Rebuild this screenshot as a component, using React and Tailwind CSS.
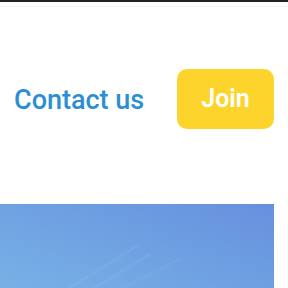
export default function App() {
  return (
    <div className="w-[288px] h-[288px] overflow-hidden bg-white" style={{ fontFamily: 'Roboto, "Noto Sans", sans-serif' }}>
      <div className="h-[2px] bg-[#222]" />
      <div className="mt-[4px] h-px bg-[#f4f4f4]" />
      <div className="flex items-center justify-between pl-[14px] pr-[14px] mt-[62px]">
        <span className="text-[27px] font-medium text-[#2c8fd5] pt-[2px]">Contact us</span>
        <button className="w-[97px] h-[60px] rounded-[10px] bg-[#fdd42b] text-white text-[25px] font-semibold">Join</button>
      </div>
      <div className="mt-[75px] mr-[14px] h-[100px] bg-gradient-to-bl from-[#6790de] to-[#78b4e6] relative overflow-hidden">
        <svg className="absolute inset-0" width="274" height="90" viewBox="0 0 274 90">
          <path d="M60 90 L140 40" stroke="#ffffff" strokeOpacity="0.05" strokeWidth="3" />
          <path d="M85 90 L150 50" stroke="#ffffff" strokeOpacity="0.05" strokeWidth="3" />
          <path d="M110 90 L180 55" stroke="#ffffff" strokeOpacity="0.04" strokeWidth="3" />
        </svg>
      </div>
    </div>
  );
}
